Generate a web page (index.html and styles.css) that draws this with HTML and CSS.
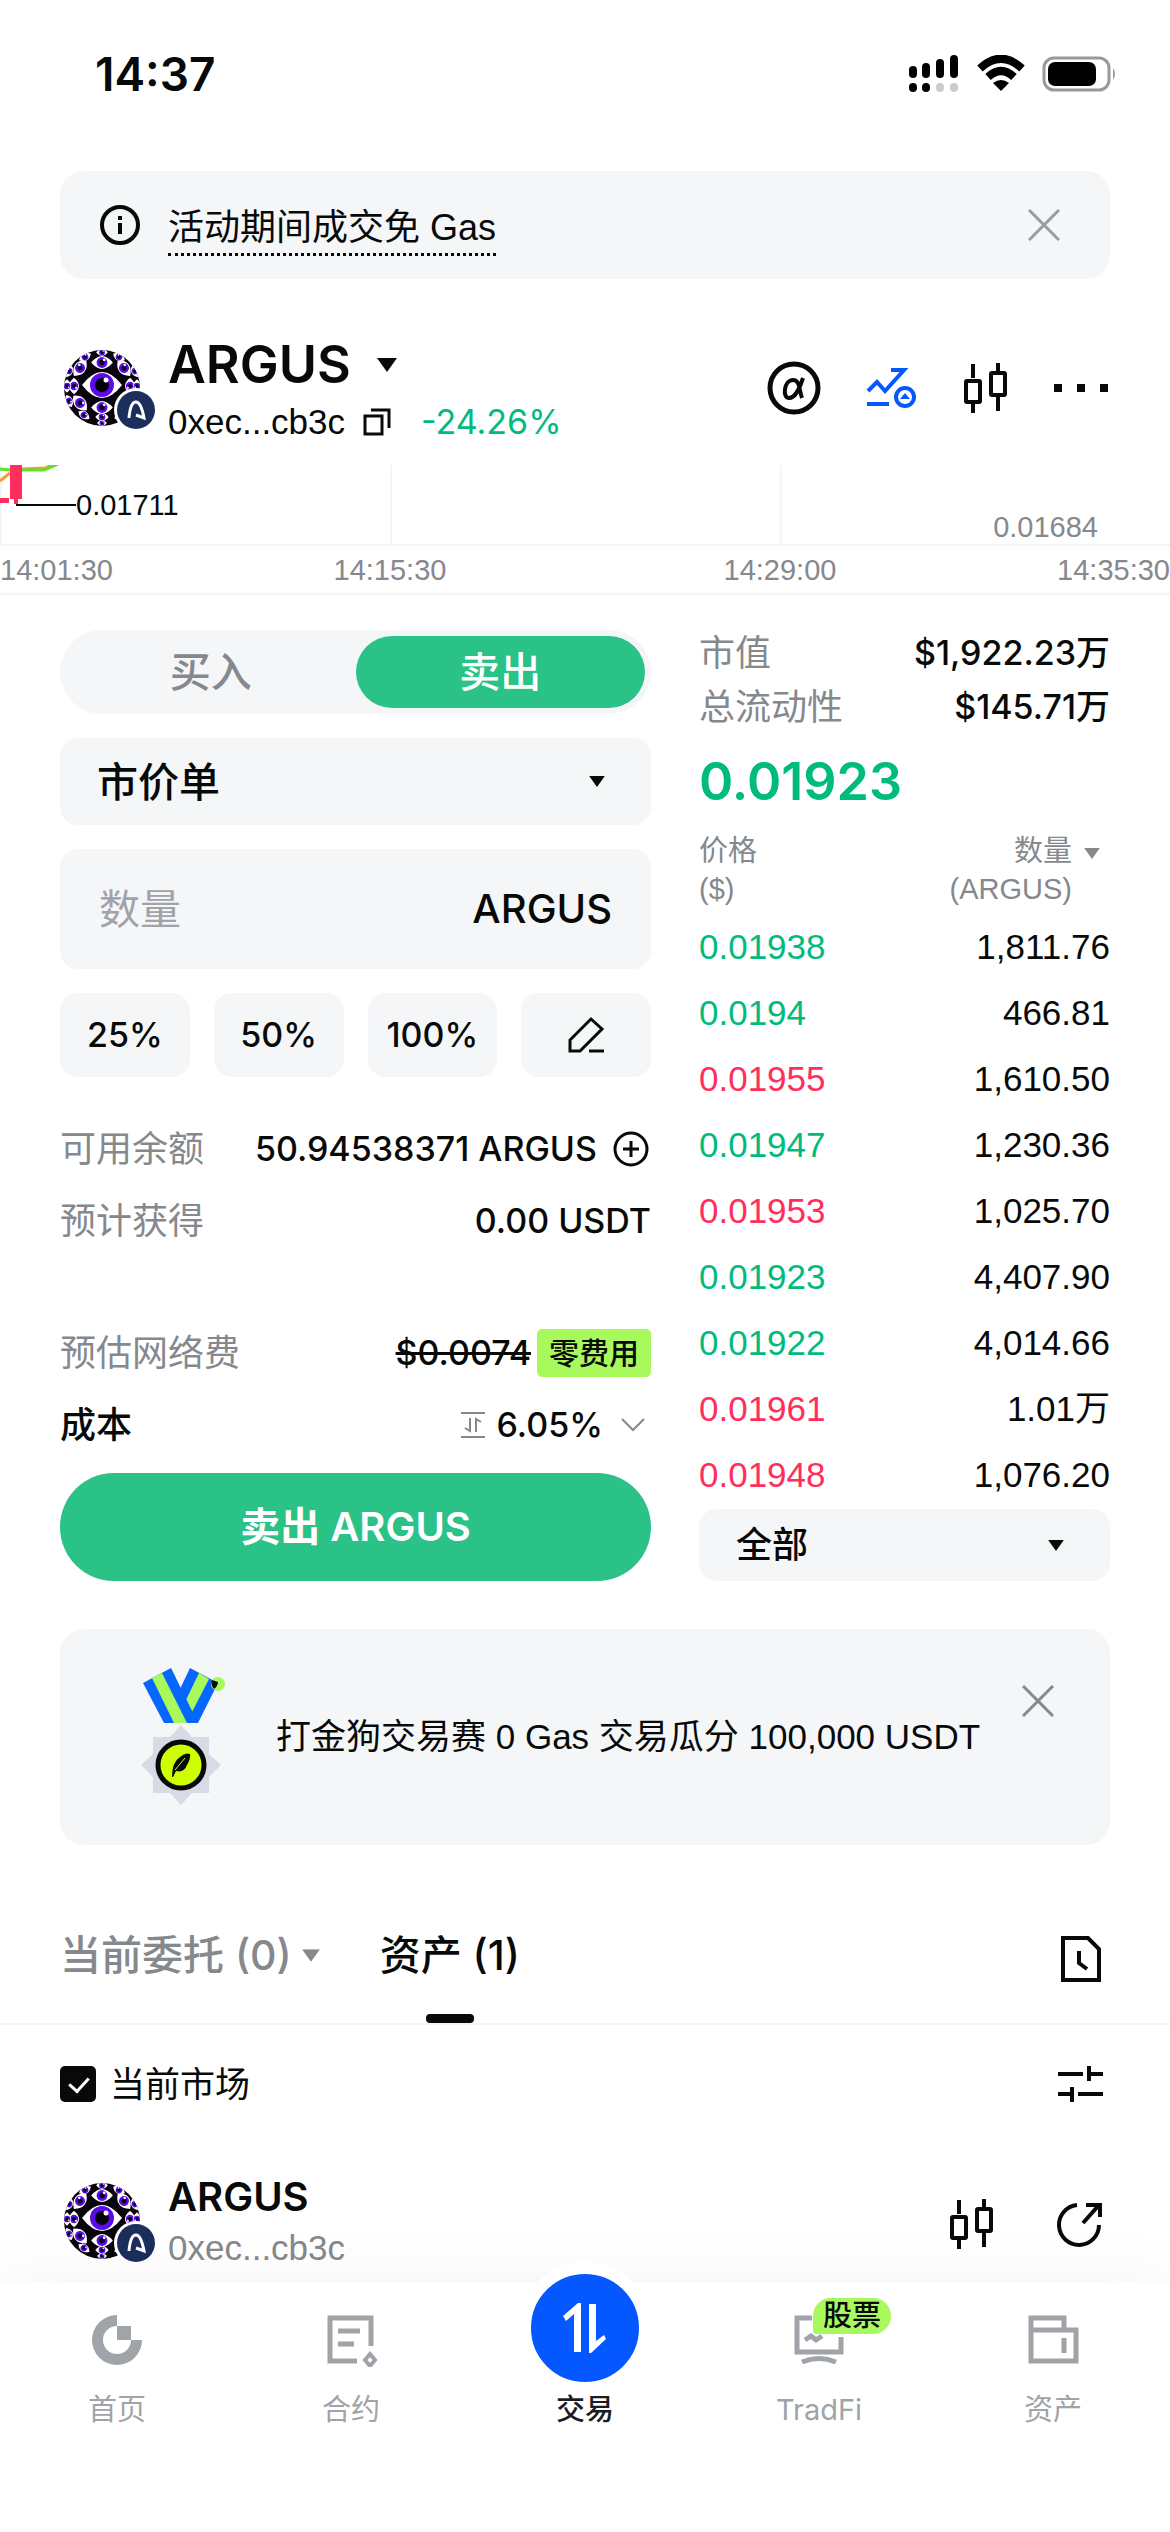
FILE: index.html
```html
<!DOCTYPE html>
<html lang="zh-CN">
<head>
    <meta charset="UTF-8">
    <meta name="viewport" content="width=device-width, initial-scale=1.0">
    <title>ARGUS 交易</title>
    <link rel="stylesheet" href="styles.css">
</head>
<body>
<!-- shared icons -->
<svg class="sprite" aria-hidden="true">
    <symbol id="eye" viewBox="-20 -12 40 24">
        <path d="M-20 0Q-10-12 0-12T20 0Q10 12 0 12T-20 0Z" fill="#fff"/>
        <circle r="10" fill="#5b0be8"/>
        <circle r="5" fill="#05010c"/>
        <circle cx="4" cy="-5" r="2.5" fill="#fff"/>
    </symbol>
    <symbol id="token" viewBox="0 0 96 84">
        <clipPath id="ball"><circle cx="42" cy="42" r="38"/></clipPath>
        <circle cx="42" cy="42" r="38" fill="#070509"/>
        <g clip-path="url(#ball)">
            <path d="M22 39Q32 26 42 26T62 39Q52 52 42 52T22 39Z" fill="#fff"/>
            <circle cx="42" cy="39" r="12" fill="#5b0be8"/>
            <circle cx="42" cy="39" r="7" fill="#05010c"/>
            <circle cx="46" cy="34" r="2.5" fill="#fff"/>
            <use href="#eye" x="31" y="10" width="22" height="13"/>
            <use href="#eye" x="31" y="55" width="22" height="13"/>
            <use href="#eye" x="34" y="3" width="16" height="7"/>
            <use href="#eye" x="34" y="67" width="16" height="8"/>
            <use href="#eye" x="34" y="74" width="16" height="6"/>
            <g id="side">
                <use href="#eye" x="-10" y="-6" width="20" height="12" transform="translate(20 22) rotate(-52)"/>
                <use href="#eye" x="-10" y="-6" width="20" height="12" transform="translate(20 57) rotate(48)"/>
                <use href="#eye" x="-9" y="-5" width="18" height="10" transform="translate(14 40) rotate(90)"/>
                <use href="#eye" x="-8" y="-4" width="16" height="8" transform="translate(7 40) rotate(90)"/>
                <use href="#eye" x="-8" y="-4" width="16" height="8" transform="translate(9 25) rotate(-68)"/>
                <use href="#eye" x="-8" y="-4" width="16" height="8" transform="translate(9 55) rotate(66)"/>
                <use href="#eye" x="-8" y="-4" width="16" height="8" transform="translate(25 11) rotate(-28)"/>
                <use href="#eye" x="-8" y="-4" width="16" height="8" transform="translate(24 69) rotate(34)"/>
            </g>
            <use href="#side" transform="translate(84 0) scale(-1 1)"/>
        </g>
        <circle cx="76" cy="64" r="22" fill="#fff"/>
        <circle cx="76" cy="64" r="19" fill="#1c2f5c"/>
        <path d="M69 72C70 60 73 56 76 56s6 5 8 16l-8-3" fill="none" stroke="#fff" stroke-width="3"/>
    </symbol>
    <symbol id="candles" viewBox="0 0 46 50">
        <path d="M10 1v14M10 40v10M35 0v9M35 34v14" stroke="currentColor" stroke-width="4"/>
        <rect x="3" y="18" width="14" height="21" rx="1" fill="none" stroke="currentColor" stroke-width="4"/>
        <rect x="28" y="10" width="14" height="22" rx="1" fill="none" stroke="currentColor" stroke-width="4"/>
    </symbol>
    <symbol id="caret" viewBox="0 0 20 14"><path d="M0 0h20L10 14Z" fill="currentColor"/></symbol>
    <symbol id="close" viewBox="0 0 32 32"><path d="M1 1l30 30M31 1L1 31" stroke="currentColor" stroke-width="3"/></symbol>
</svg>

<div class="status-bar">
    <span class="time">14:37</span>
    <div class="status-icons">
        <svg width="52" height="38" viewBox="0 0 52 38">
            <path d="M5 15v4M18 12v7M32 8v11M46 4v15M5 32v1M18 32v1" stroke="#000" stroke-width="8" stroke-linecap="round"/>
            <path d="M32 32v1M46 32v1" stroke="#ccc" stroke-width="8" stroke-linecap="round"/>
        </svg>
        <svg width="50" height="37" viewBox="0 0 50 37">
            <path d="M4 13.500Q25-6 46 13.500M12 22q13-12 26 0" fill="none" stroke="#000" stroke-width="8"/>
            <path d="M17 28q8-6 16 0l-8 8Z"/>
        </svg>
        <svg width="76" height="36" viewBox="0 0 76 36">
            <rect x="2" y="2" width="65" height="32" rx="10" fill="none" stroke="#999" stroke-width="3"/>
            <rect x="6" y="6" width="48" height="24" rx="7"/>
            <path d="M71 12q4 6 0 12Z" fill="#999"/>
        </svg>
    </div>
</div>

<div class="notice">
    <svg width="40" height="40" viewBox="0 0 40 40">
        <circle cx="20" cy="20" r="18" fill="none" stroke="#080a0a" stroke-width="4"/>
        <path d="M20 18v11M20 11v4" stroke="#080a0a" stroke-width="4"/>
    </svg>
    <a href="#gas">活动期间成交免 Gas</a>
    <button class="icon-btn close" aria-label="关闭"><svg width="32" height="32"><use href="#close"/></svg></button>
</div>

<header class="pair">
    <svg class="token" width="96" height="84"><use href="#token"/></svg>
    <div class="pair-info">
        <h1>ARGUS <svg width="20" height="14"><use href="#caret"/></svg></h1>
        <div class="pair-sub">
            <span class="address">0xec...cb3c</span>
            <svg width="28" height="28" viewBox="0 0 28 28" fill="none" stroke="#080a0a" stroke-width="3">
                <path d="M2 8h17v18H2ZM8 2h18v18"/>
            </svg>
            <span class="change">-24.26%</span>
        </div>
    </div>
    <div class="pair-tools">
        <button class="icon-btn" aria-label="Alpha">
            <svg width="54" height="54" viewBox="0 0 54 54" fill="none" stroke="#080a0a">
                <circle cx="27" cy="27" r="24" stroke-width="5"/>
                <path d="M36 17C33 26 29 37 22 37c-7 0-5-18 4-18 7 0 6 10 9 18" stroke-width="4"/>
            </svg>
        </button>
        <button class="icon-btn" aria-label="走势">
            <svg width="52" height="44" viewBox="0 0 52 44" fill="none" stroke="#0558ff" stroke-width="4">
                <path d="M2 25l9-9 8 9L38 4H25M1 38h22"/>
                <circle cx="39" cy="31" r="9"/>
                <path d="M39 27l5 6H34Z" fill="#0558ff" stroke="none"/>
            </svg>
        </button>
        <button class="icon-btn" aria-label="K线"><svg width="46" height="50"><use href="#candles"/></svg></button>
        <button class="icon-btn" aria-label="更多">
            <svg width="54" height="8" viewBox="0 0 54 8"><path d="M0 0h8v8H0ZM23 0h8v8h-8ZM46 0h8v8h-8Z" fill="#080a0a"/></svg>
        </button>
    </div>
</header>

<section class="chart">
    <div class="plot">
        <svg width="76" height="42" viewBox="0 0 76 42" fill="none">
            <path d="M0 16l10-8M22 4l23-1 10-4" stroke="#ff9a2e" stroke-width="3"/>
            <path d="M0 4l10 1h34l14-6" stroke="#5be22c" stroke-width="3"/>
            <path d="M10 0h12v34H10ZM14 34h4v5h-4ZM0 33h9v5H0Z" fill="#ff2e5c"/>
            <path d="M16 40h60" stroke="#080a0a" stroke-width="2"/>
        </svg>
        <span class="low">0.01711</span>
        <span class="axis-price">0.01684</span>
    </div>
    <div class="axis">
        <span>14:01:30</span><span>14:15:30</span><span>14:29:00</span><span>14:35:30</span>
    </div>
</section>

<main class="trade">
    <form class="order">
        <div class="side-switch">
            <button type="button">买入</button>
            <button type="button" class="active">卖出</button>
        </div>
        <div class="select order-type">
            <select aria-label="订单类型"><option>市价单</option></select>
            <svg width="16" height="11" viewBox="0 0 20 14"><use href="#caret"/></svg>
        </div>
        <label class="amount">
            <input type="text" placeholder="数量">
            <span>ARGUS</span>
        </label>
        <div class="percents">
            <button type="button">25%</button>
            <button type="button">50%</button>
            <button type="button">100%</button>
            <button type="button" aria-label="自定义">
                <svg width="38" height="38" viewBox="0 0 38 38" fill="none" stroke="#080a0a" stroke-width="3">
                    <path d="M24 3l11 10-22 22H3V24ZM22 35h15"/>
                </svg>
            </button>
        </div>
        <dl class="details">
            <div>
                <dt>可用余额</dt>
                <dd>50.94538371 ARGUS
                    <svg class="plus" width="36" height="36" viewBox="0 0 36 36" fill="none" stroke="#080a0a" stroke-width="3">
                        <circle cx="18" cy="18" r="16"/><path d="M18 10v16M10 18h16"/>
                    </svg>
                </dd>
            </div>
            <div><dt>预计获得</dt><dd>0.00 USDT</dd></div>
            <div class="fee"><dt>预估网络费</dt><dd><s>$0.0074</s><span class="tag">零费用</span></dd></div>
            <div class="cost">
                <dt>成本</dt>
                <dd>
                    <svg width="24" height="28" viewBox="0 0 24 28" fill="none" stroke="#85888c" stroke-width="2">
                        <path d="M0 2h24M0 26h24M9 7v13l-5-3M15 21V8l5 3"/>
                    </svg>
                    6.05%
                    <svg class="chevron" width="26" height="16" viewBox="0 0 26 16" fill="none" stroke="#85888c" stroke-width="2"><path d="M2 2l11 11L24 2"/></svg>
                </dd>
            </div>
        </dl>
        <button type="button" class="submit">卖出 ARGUS</button>
    </form>

    <section class="book">
        <dl class="stats">
            <div><dt>市值</dt><dd>$1,922.23万</dd></div>
            <div><dt>总流动性</dt><dd>$145.71万</dd></div>
        </dl>
        <p class="last-price">0.01923</p>
        <table>
            <thead>
            <tr>
                <th>价格<br>($)</th>
                <th><span>数量<br>(ARGUS)</span><svg width="16" height="11" viewBox="0 0 20 14"><use href="#caret"/></svg></th>
            </tr>
            </thead>
            <tbody>
            <tr><td class="up">0.01938</td><td>1,811.76</td></tr>
            <tr><td class="up">0.0194</td><td>466.81</td></tr>
            <tr><td class="down">0.01955</td><td>1,610.50</td></tr>
            <tr><td class="up">0.01947</td><td>1,230.36</td></tr>
            <tr><td class="down">0.01953</td><td>1,025.70</td></tr>
            <tr><td class="up">0.01923</td><td>4,407.90</td></tr>
            <tr><td class="up">0.01922</td><td>4,014.66</td></tr>
            <tr><td class="down">0.01961</td><td>1.01万</td></tr>
            <tr><td class="down">0.01948</td><td>1,076.20</td></tr>
            </tbody>
        </table>
        <div class="select filter">
            <select aria-label="成交筛选"><option>全部</option></select>
            <svg width="16" height="11" viewBox="0 0 20 14"><use href="#caret"/></svg>
        </div>
    </section>
</main>

<aside class="banner">
    <svg class="medal" width="86" height="140" viewBox="0 0 86 140">
        <path d="M50 1l28 15-20 40H46L40 22Z" fill="#0667ff"/>
        <path d="M59 6l10 6-17 33-6-12Z" fill="#a8f95c"/>
        <path d="M3 16L31 1l27 55H24Z" fill="#0667ff"/>
        <path d="M12 11l10-5 25 50H34Z" fill="#a8f95c"/>
        <circle cx="78" cy="17" r="7" fill="#a8f95c"/>
        <path d="M72 13q-2 4 2 9 4-3 4-7Z" fill="#080a0a"/>
        <path d="M41 58l11 12h17v17l12 11-12 12v16H52l-11 12-11-12H13v-16L1 98l12-11V70h17Z" fill="#d9dae6"/>
        <circle cx="41" cy="98" r="23" fill="#ceff00" stroke="#080a0a" stroke-width="5"/>
        <path d="M32 110q0-15 8-20 5-5 10-3 1 4-3 11-3 8-11 6l-3 6Z" fill="#080a0a"/>
        <path d="M35 103l10-12" stroke="#ceff00" stroke-width="1"/>
    </svg>
    <p>打金狗交易赛 0 Gas 交易瓜分 100,000 USDT</p>
    <button class="icon-btn close" aria-label="关闭"><svg width="32" height="32"><use href="#close"/></svg></button>
</aside>

<nav class="tabs">
    <a href="#orders">当前委托 (0) <svg width="18" height="13" viewBox="0 0 20 14"><use href="#caret"/></svg></a>
    <a href="#assets" class="active">资产 (1)</a>
    <button class="icon-btn" aria-label="历史记录">
        <svg width="42" height="48" viewBox="0 0 42 48" fill="none" stroke="#080a0a" stroke-width="4">
            <path d="M3 3h25l11 11v31H3ZM19 16v12l8 6"/>
        </svg>
    </button>
</nav>

<section class="assets">
    <div class="asset-filter">
        <label><input type="checkbox" checked> 当前市场</label>
        <button class="icon-btn" aria-label="筛选">
            <svg width="46" height="36" viewBox="0 0 46 36" fill="none" stroke="#080a0a" stroke-width="4">
                <path d="M1 8h25M32 0v15M32 8h14M1 28h12M15 21v15M21 28h25"/>
            </svg>
        </button>
    </div>
    <div class="asset">
        <svg class="token" width="96" height="84"><use href="#token"/></svg>
        <div class="asset-name">
            <strong>ARGUS</strong>
            <span class="address">0xec...cb3c</span>
        </div>
        <button class="icon-btn" aria-label="K线"><svg width="46" height="50"><use href="#candles"/></svg></button>
        <button class="icon-btn" aria-label="分享">
            <svg width="46" height="46" viewBox="0 0 46 46" fill="none" stroke="#080a0a" stroke-width="4">
                <path d="M20 4a20 20 0 1 0 22 20M26 22L42 4M29 4h14v12"/>
            </svg>
        </button>
    </div>
</section>

<nav class="tabbar">
    <a href="#home">
        <svg width="54" height="54" viewBox="0 0 54 54" fill="#a0a3a8">
            <path d="M27 2v11a14 14 0 1 0 14 14h11A25 25 0 1 1 27 2Z"/>
            <path d="M27 13h14v14H27Z"/>
        </svg>
        首页
    </a>
    <a href="#futures">
        <svg width="54" height="54" viewBox="0 0 54 54" fill="none" stroke="#a0a3a8" stroke-width="5">
            <path d="M33 48H6V5h41v28M14 18h22M14 31h16"/>
            <path d="M46 41l5 6-5 6-5-6Z" stroke-width="4"/>
        </svg>
        合约
    </a>
    <a href="#trade" class="current">
        <span class="trade-btn">
            <svg width="46" height="50" viewBox="0 0 46 50" fill="#fff">
                <path d="M19 0v49h-7V11L4 18 1 13 16 0ZM27 1h7v37l8-6 2 4-15 14h-2Z"/>
            </svg>
        </span>
        交易
    </a>
    <a href="#tradfi">
        <svg width="54" height="54" viewBox="0 0 54 54" fill="none" stroke="#a0a3a8" stroke-width="5">
            <path d="M20 5H5v34h44V24M13 27l6-4 5 4 6-4"/>
            <path d="M10 49q17-7 34 0"/>
        </svg>
        <span class="badge">股票</span>
        TradFi
    </a>
    <a href="#wallet">
        <svg width="54" height="54" viewBox="0 0 54 54" fill="none" stroke="#a0a3a8" stroke-width="5">
            <path d="M5 17V5h33v12M5 17h45v31H5ZM38 25v15"/>
        </svg>
        资产
    </a>
</nav>
</body>
</html>
```
FILE: styles.css
```css
* {
    box-sizing: border-box;
}
body {
    margin: 0;
    min-height: 100vh;
    display: flex;
    flex-direction: column;
    font-family: "Inter", "Noto Sans CJK SC", sans-serif;
    font-size: 36px;
    line-height: 48px;
    color: #080a0a;
    background: #fff;
}
h1, p, dl, dd {
    margin: 0;
}
a {
    color: inherit;
    text-decoration: none;
}
svg {
    display: block;
    flex-shrink: 0;
}
button, input, select {
    font: inherit;
    color: inherit;
    border: none;
    padding: 0;
}
button {
    cursor: pointer;
}
.sprite {
    position: absolute;
    width: 0;
    height: 0;
}
.icon-btn {
    background: none;
}
.close {
    color: #999ca0;
}

/* regular weight text */
.address, .notice a, .chart, table, .banner p {
    font-family: "Liberation Sans", "Noto Sans CJK SC", sans-serif;
}
.address {
    font-size: 35px;
}

/* status bar */
.status-bar {
    display: flex;
    justify-content: space-between;
    align-items: center;
    height: 147px;
    padding: 0 52px 0 95px;
}
.time {
    font-size: 46px;
    font-weight: 600;
}
.status-icons {
    display: flex;
    align-items: center;
    gap: 16px;
}

/* notice */
.notice {
    display: flex;
    align-items: center;
    height: 108px;
    margin: 24px 60px 0;
    padding: 0 50px 0 40px;
    border-radius: 24px;
    background: #f5f6f8;
}
.notice a {
    margin: 8px 0 0 28px;
    border-bottom: 3px dotted #080a0a;
    line-height: 50px;
}
.notice .close {
    margin-left: auto;
}

/* pair header */
.pair {
    display: flex;
    align-items: center;
    height: 186px;
    padding: 32px 62px 0 60px;
}
.token {
    margin-right: 12px;
}
.pair-info {
    flex: 1;
    padding-top: 8px;
}
h1 {
    display: flex;
    align-items: center;
    gap: 26px;
    font-size: 52px;
    font-weight: 600;
    line-height: 60px;
}
.pair-sub {
    display: flex;
    align-items: center;
    gap: 18px;
    line-height: 54px;
}
.change {
    margin-left: 12px;
    font-size: 34px;
    color: #00bb7d;
}
.pair-tools {
    display: flex;
    align-items: center;
    gap: 45px;
}

/* chart */
.plot {
    display: flex;
    align-items: flex-start;
    height: 81px;
    border-bottom: 2px solid #f5f5f5;
    font-size: 29px;
    line-height: 40px;
    background: repeating-linear-gradient(to right, #f5f5f5 0, #f5f5f5 2px, transparent 2px, transparent 33.333%);
}
.low {
    margin-top: 20px;
}
.axis-price {
    margin: 42px 72px 0 auto;
    color: #85888c;
}
.axis {
    display: grid;
    grid-template-columns: 1fr 2fr 2fr 1fr;
    height: 49px;
    border-bottom: 2px solid #f5f5f5;
    font-size: 29px;
    line-height: 48px;
    text-align: center;
    color: #85888c;
}
.axis span:first-child {
    text-align: left;
}
.axis span:last-child {
    text-align: right;
}

/* trade area */
.trade {
    display: grid;
    grid-template-columns: 591fr 411fr;
    gap: 48px;
    padding: 35px 60px 0;
}
.order {
    display: flex;
    flex-direction: column;
    gap: 24px;
    min-width: 0;
}
.side-switch {
    display: flex;
    padding: 6px;
    border-radius: 42px;
    background: #f5f6f8;
}
.side-switch button {
    flex: 1;
    height: 72px;
    border-radius: 36px;
    font-size: 41px;
    font-weight: 500;
    color: #85888c;
    background: none;
}
.side-switch .active {
    color: #fff;
    background: #2bc287;
}
.select {
    display: flex;
    align-items: center;
    position: relative;
    border-radius: 18px;
    background: #f5f6f8;
}
.select select {
    width: 100%;
    height: 100%;
    padding: 0 37px;
    appearance: none;
    background: none;
    font-weight: 500;
}
.select svg {
    position: absolute;
    right: 46px;
    pointer-events: none;
}
.order-type {
    height: 87px;
    font-size: 41px;
}
.amount {
    display: flex;
    align-items: center;
    height: 120px;
    padding: 0 39px;
    border-radius: 18px;
    background: #f5f6f8;
    font-size: 40px;
    font-weight: 500;
}
.amount input {
    flex: 1;
    min-width: 0;
    font-size: 41px;
    font-weight: 400;
    background: none;
}
.amount input::placeholder {
    color: #a0a3a8;
}
.percents {
    display: grid;
    grid-template-columns: repeat(4, 1fr);
    gap: 24px;
}
.percents button {
    display: flex;
    align-items: center;
    justify-content: center;
    height: 84px;
    border-radius: 18px;
    background: #f5f6f8;
    font-size: 34px;
    font-weight: 500;
}
.details {
    margin: 12px 0 -12px;
}
.details div, .stats div {
    display: flex;
    align-items: center;
    justify-content: space-between;
}
.details div {
    height: 72px;
}
dt {
    color: #85888c;
}
dd {
    display: flex;
    align-items: center;
    gap: 12px;
    font-size: 34px;
    font-weight: 500;
}
.plus {
    margin: 0 2px 0 4px;
}
.details .fee {
    margin-top: 60px;
}
.fee dd {
    gap: 6px;
}
.tag {
    padding: 0 12px;
    border-radius: 5px;
    font-size: 30px;
    background: #a8f95c;
}
.cost dt {
    color: #080a0a;
    font-weight: 500;
}
.chevron {
    margin: 0 5px;
}
.submit {
    height: 108px;
    border-radius: 54px;
    font-size: 40px;
    font-weight: 600;
    color: #fff;
    background: #2bc287;
}

/* order book */
.book {
    display: flex;
    flex-direction: column;
    min-width: 0;
}
.stats div {
    height: 46px;
    margin-bottom: 8px;
}
.last-price {
    margin-top: 14px;
    font-size: 52px;
    font-weight: 600;
    line-height: 60px;
    color: #00bb7d;
}
table {
    width: 100%;
    margin-top: 20px;
    border-collapse: collapse;
}
th {
    height: 82px;
    padding: 0;
    font-size: 29px;
    font-weight: 400;
    line-height: 38px;
    color: #85888c;
    text-align: left;
    vertical-align: top;
}
th:last-child {
    display: flex;
    justify-content: flex-end;
    gap: 12px;
    padding-right: 10px;
}
th svg {
    margin-top: 16px;
}
td {
    height: 66px;
    padding: 0;
    font-size: 35px;
}
th:last-child, td:last-child {
    text-align: right;
}
.up {
    color: #00bb7d;
}
.down {
    color: #ff2e5c;
}
.filter {
    height: 72px;
    margin-top: auto;
}

/* banner */
.banner {
    display: flex;
    height: 216px;
    margin: 48px 60px 0;
    padding: 0 56px 0 80px;
    border-radius: 24px;
    background: #f5f6f8;
}
.medal {
    margin-top: 38px;
}
.banner p {
    margin-left: 50px;
    font-size: 35px;
    line-height: 216px;
}
.banner .close {
    align-self: flex-start;
    margin: 56px 0 0 auto;
    color: #85888c;
}

/* tabs */
.tabs {
    display: flex;
    align-items: flex-end;
    height: 180px;
    padding: 0 68px 0 60px;
    border-bottom: 2px solid #f5f5f5;
    font-size: 41px;
    font-weight: 500;
}
.tabs a {
    display: flex;
    align-items: center;
    gap: 10px;
    position: relative;
    height: 136px;
    margin-right: 60px;
    color: #85888c;
}
.tabs a.active {
    color: #080a0a;
}
.tabs a.active::after {
    content: "";
    position: absolute;
    bottom: 0;
    left: 50%;
    width: 48px;
    height: 9px;
    margin-left: -24px;
    border-radius: 4px;
    background: #080a0a;
}
.tabs .icon-btn {
    margin: 0 0 40px auto;
}

/* assets */
.asset-filter {
    display: flex;
    align-items: center;
    justify-content: space-between;
    padding: 35px 67px 0 60px;
}
.asset-filter label {
    display: flex;
    align-items: center;
    gap: 14px;
    font-size: 35px;
}
.asset-filter input {
    appearance: none;
    width: 36px;
    height: 36px;
    margin: 0;
    border-radius: 5px;
    background: #080a0a;
}
.asset-filter input:checked::before {
    content: "";
    display: block;
    width: 9px;
    height: 16px;
    margin: 7px 0 0 13px;
    border: solid #fff;
    border-width: 0 3px 3px 0;
    transform: rotate(42deg);
}
.asset {
    display: flex;
    align-items: center;
    padding: 62px 67px 0 60px;
}
.asset-name {
    flex: 1;
}
.asset-name strong, .asset-name span {
    display: block;
}
.asset-name strong {
    font-size: 40px;
    font-weight: 600;
    line-height: 54px;
}
.asset-name span {
    color: #85888c;
}
.asset .icon-btn {
    margin: 6px 0 0 62px;
}

/* bottom bar */
.tabbar {
    display: grid;
    grid-template-columns: repeat(5, 1fr);
    position: relative;
    height: 249px;
    margin-top: auto;
    background: #fff;
    box-shadow: 0 -10px 60px rgba(0, 0, 0, 0.04);
}
.tabbar a {
    display: flex;
    flex-direction: column;
    align-items: center;
    gap: 20px;
    position: relative;
    height: 150px;
    padding-top: 30px;
    font-size: 29px;
    line-height: 46px;
    color: #a0a3a8;
}
.tabbar .current {
    color: #1c1d24;
    font-weight: 500;
}
.trade-btn {
    display: flex;
    align-items: center;
    justify-content: center;
    width: 132px;
    height: 132px;
    margin: -51px 0 -27px;
    border: 12px solid #fff;
    border-radius: 50%;
    background: #0558ff;
}
.badge {
    position: absolute;
    top: 15px;
    left: 50%;
    padding: 0 10px;
    margin-left: -6px;
    border-radius: 18px 18px 18px 3px;
    font-size: 29px;
    font-weight: 500;
    line-height: 36px;
    color: #080a0a;
    background: #a8f95c;
}
```
